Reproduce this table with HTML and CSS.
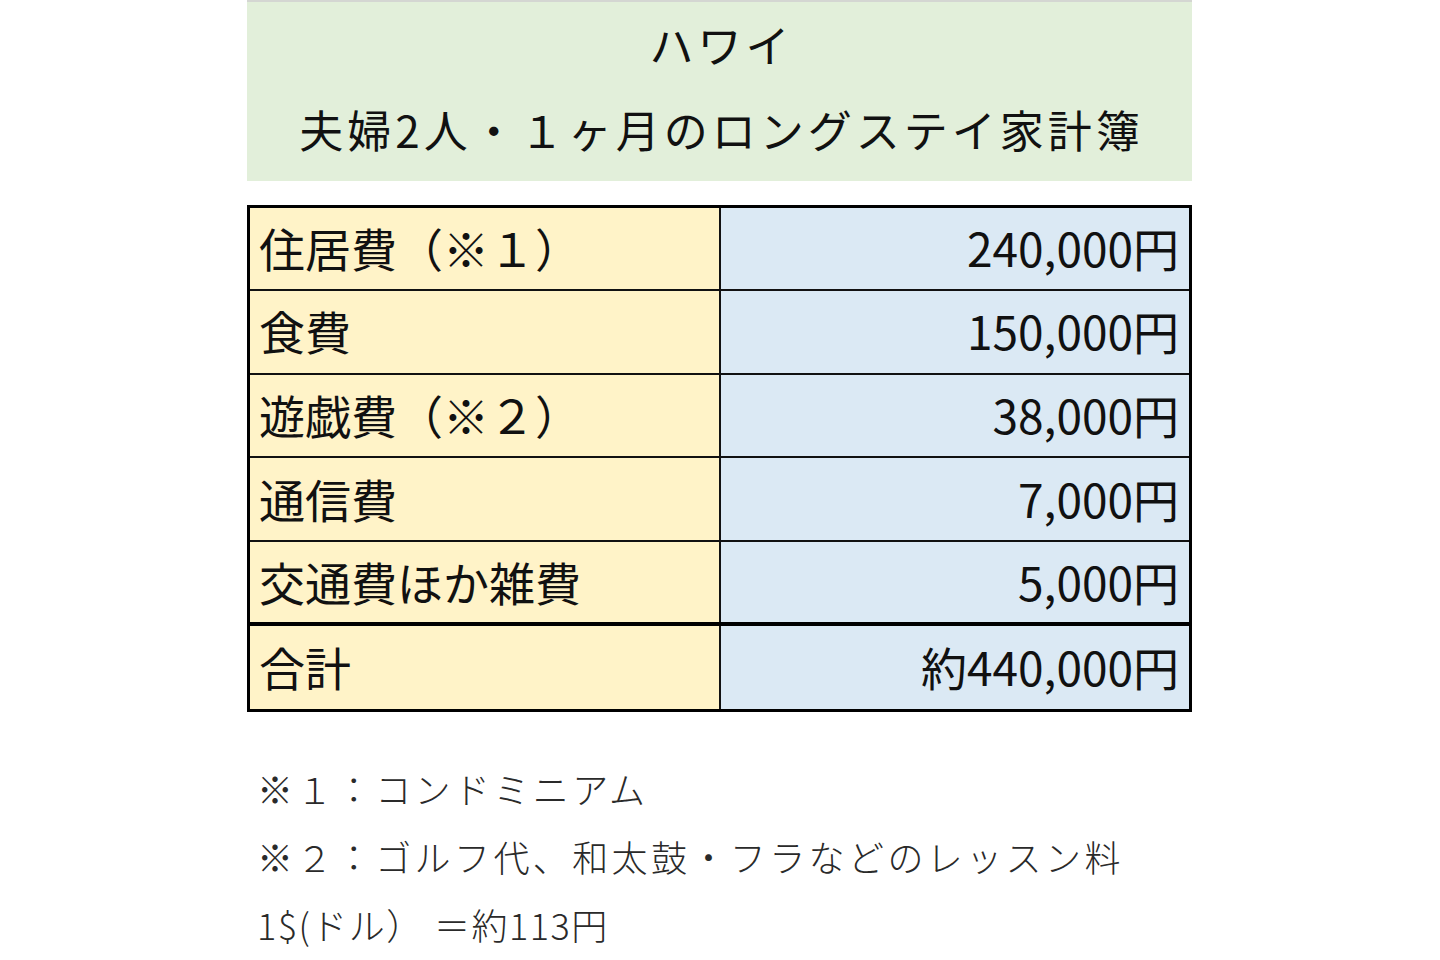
FILE: index.html
```html
<!DOCTYPE html>
<html lang="ja">
<head>
<meta charset="utf-8">
<title>ハワイ 家計簿</title>
<link rel="stylesheet" href="styles.css">
</head>
<body>
<main class="page">
  <header class="title-box">
    <div class="title-line">ハワイ</div>
    <div class="title-line">夫婦2人・１ヶ月のロングステイ家計簿</div>
  </header>
  <table class="budget">
    <tbody>
      <tr><td class="item">住居費（※１）</td><td class="amount">240,000円</td></tr>
      <tr><td class="item">食費</td><td class="amount">150,000円</td></tr>
      <tr><td class="item">遊戯費（※２）</td><td class="amount">38,000円</td></tr>
      <tr><td class="item">通信費</td><td class="amount">7,000円</td></tr>
      <tr><td class="item">交通費ほか雑費</td><td class="amount">5,000円</td></tr>
      <tr class="total"><td class="item">合計</td><td class="amount">約440,000円</td></tr>
    </tbody>
  </table>
  <section class="notes">
    <p class="note">※１：コンドミニアム</p>
    <p class="note">※２：ゴルフ代、和太鼓・フラなどのレッスン料</p>
    <p class="note rate">1$(ドル）<span class="gap"></span>＝約113円</p>
  </section>
</main>
</body>
</html>
```

FILE: styles.css
```css
html, body {
  margin: 0;
  padding: 0;
  background: #ffffff;
}

body {
  font-family: "Noto Sans CJK JP", "Noto Sans", sans-serif;
  color: #111111;
}

.page {
  width: 945px;
  margin-left: 247px;
}

.title-box {
  height: 181px;
  background: #e2efda;
  border-top: 2px solid #d4d6d2;
  display: flex;
  flex-direction: column;
  align-items: center;
  justify-content: flex-start;
  padding-top: 13px;
  box-sizing: border-box;
}

.title-line {
  font-size: 44px;
  line-height: 58px;
  letter-spacing: 4px;
  margin-right: -4px;
  font-weight: 400;
  color: #111;
}

.title-line + .title-line {
  margin-top: 27px;
}

.budget {
  margin-top: 24px;
  width: 945px;
  border-collapse: collapse;
  border: 3px solid #000;
  table-layout: fixed;
}

.budget td {
  height: 83.6px;
  padding: 0 9px 3px;
  border: 2px solid #111;
  font-size: 46px;
  line-height: 1;
  box-sizing: border-box;
  vertical-align: middle;
}

.budget .item {
  width: 471px;
  background: #fff3c8;
  text-align: left;
}

.budget .amount {
  background: #dbe9f4;
  text-align: right;
  padding-right: 10px;
}

.budget .total td {
  border-top: 4px solid #000;
  height: 86px;
}

.notes {
  margin-top: 42px;
  padding-left: 10px;
}

.note {
  margin: 0;
  font-size: 36px;
  line-height: 68px;
  letter-spacing: 3.4px;
  font-weight: 300;
  color: #2a2a2a;
}

.rate {
  letter-spacing: 1.5px;
}

.gap {
  display: inline-block;
  width: 10px;
}
```
